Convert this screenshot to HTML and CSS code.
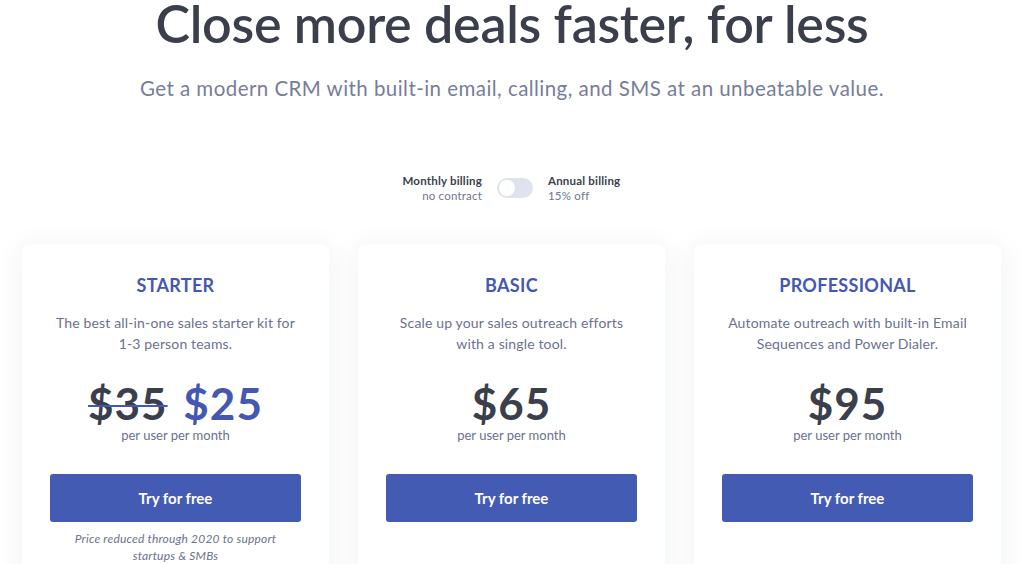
FILE: index.html
```html
<!DOCTYPE html>
<html>
<head>
<meta charset="utf-8">
<link rel="stylesheet" href="styles.css">
</head>
<body>
<header class="hero">
  <h1 class="title">Close more deals faster, for less</h1>
  <p class="subtitle">Get a modern CRM with built-in email, calling, and SMS at an unbeatable value.</p>
</header>
<div class="billing">
  <div class="bill-label left">
    <div class="bill-name">Monthly billing</div>
    <div class="bill-note">no contract</div>
  </div>
  <div class="toggle"><span class="knob"></span></div>
  <div class="bill-label right">
    <div class="bill-name">Annual billing</div>
    <div class="bill-note">15% off</div>
  </div>
</div>
<main class="plans">
  <section class="card">
    <h2 class="plan">STARTER</h2>
    <p class="desc">The best all-in-one sales starter kit for<br>1-3 person teams.</p>
    <div class="price"><span class="old">$35</span> <span class="new">$25</span></div>
    <div class="per">per user per month</div>
    <a class="btn">Try for free</a>
    <p class="note">Price reduced through 2020 to support<br>startups &amp; SMBs</p>
  </section>
  <section class="card">
    <h2 class="plan">BASIC</h2>
    <p class="desc">Scale up your sales outreach efforts<br>with a single tool.</p>
    <div class="price">$65</div>
    <div class="per">per user per month</div>
    <a class="btn">Try for free</a>
  </section>
  <section class="card">
    <h2 class="plan">PROFESSIONAL</h2>
    <p class="desc">Automate outreach with built-in Email<br>Sequences and Power Dialer.</p>
    <div class="price">$95</div>
    <div class="per">per user per month</div>
    <a class="btn">Try for free</a>
  </section>
</main>
</body>
</html>
```
FILE: styles.css
```css
html, body {
  margin: 0;
  padding: 0;
  background: #ffffff;
  overflow: hidden;
}
body {
  font-family: Lato, "Open Sans", sans-serif;
  color: #3b404d;
  width: 1024px;
  height: 564px;
}
.hero {
  text-align: center;
}
.title {
  margin: 0;
  font-size: 52px;
  line-height: 46px;
  font-weight: 600;
  color: #3a3f4b;
  letter-spacing: -0.3px;
}
.subtitle {
  margin: 30px 0 0;
  font-size: 20.5px;
  line-height: 24px;
  color: #777d99;
  font-weight: 400;
  letter-spacing: 0.45px;
}
.billing {
  display: flex;
  justify-content: center;
  align-items: center;
  gap: 15px;
  margin-top: 73px;
  padding-left: 6px;
  font-size: 11.5px;
  line-height: 15px;
  letter-spacing: 0.2px;
}
.bill-label {
  width: 110px;
}
.bill-label.left {
  text-align: right;
}
.bill-name {
  font-weight: 700;
  color: #3b404d;
}
.bill-note {
  color: #6f7591;
}
.toggle {
  width: 36px;
  height: 20px;
  border-radius: 10px;
  background: #dfe3ee;
  display: flex;
  align-items: center;
  padding: 0 2px;
  box-sizing: border-box;
}
.knob {
  width: 16px;
  height: 16px;
  border-radius: 50%;
  background: #ffffff;
}
.plans {
  display: grid;
  grid-template-columns: repeat(3, 307px);
  column-gap: 29px;
  padding-left: 22px;
  margin-top: 41px;
}
.card {
  background: #ffffff;
  border-radius: 8px;
  box-shadow: 0 4px 30px rgba(30, 40, 80, 0.07);
  min-height: 360px;
  padding: 31px 28px 0;
  text-align: center;
  box-sizing: border-box;
}
.plan {
  margin: 0;
  font-size: 18px;
  line-height: 20px;
  font-weight: 700;
  color: #4458b3;
  letter-spacing: 0.3px;
}
.desc {
  margin: 17px 0 0;
  font-size: 14px;
  line-height: 21px;
  color: #6b7190;
  letter-spacing: 0.15px;
}
.price {
  margin-top: 27px;
  font-size: 44px;
  line-height: 44px;
  font-weight: 700;
  color: #3a3f4b;
  letter-spacing: 1px;
}
.old {
  text-decoration: line-through;
  text-decoration-color: #4458b3;
  text-decoration-thickness: 2px;
}
.new {
  color: #4458b3;
  margin-left: 4px;
}
.per {
  margin-top: 2px;
  font-size: 13px;
  line-height: 16px;
  color: #6b7190;
}
.btn {
  display: flex;
  align-items: center;
  justify-content: center;
  height: 48px;
  margin-top: 31px;
  background: #445bb3;
  border-radius: 3px;
  color: #ffffff;
  font-size: 15px;
  font-weight: 700;
}
.note {
  margin: 8px 0 0;
  font-size: 12px;
  line-height: 17px;
  font-style: italic;
  color: #6b7190;
  letter-spacing: 0.2px;
}
```
